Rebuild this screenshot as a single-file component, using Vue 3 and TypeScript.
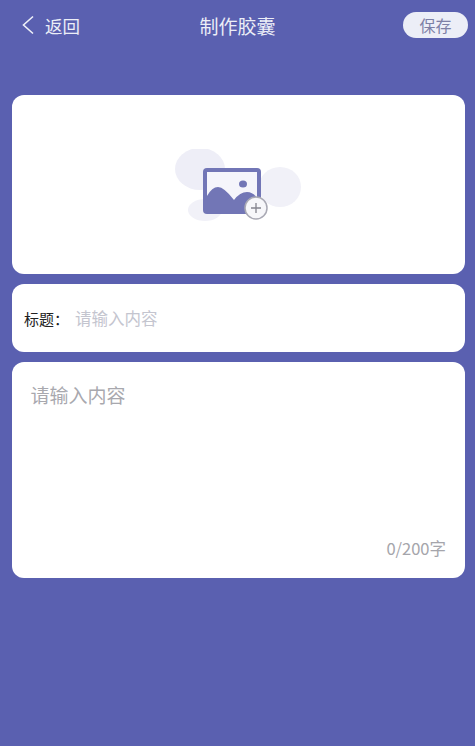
<script setup lang="ts">
const title = '制作胶囊'
</script>

<template>
  <div class="page">
    <header class="nav">
      <div class="back">
        <svg class="chev" width="14" height="20" viewBox="0 0 14 20">
          <path d="M12 1.5 L2.5 10 L12 18.5" fill="none" stroke="#eef0f8" stroke-width="1.6" />
        </svg>
        <span>返回</span>
      </div>
      <div class="title">{{ title }}</div>
      <div class="save">保存</div>
    </header>
    <main class="cards">
      <section class="card upload">
        <svg width="128" height="76" viewBox="0 0 128 76">
          <ellipse cx="26" cy="20" rx="25" ry="21" fill="#eeeef7" />
          <ellipse cx="106" cy="38" rx="21" ry="20" fill="#f1f1f8" />
          <ellipse cx="31" cy="61" rx="17" ry="11" fill="#f1f1f8" />
          <rect x="29" y="19" width="58" height="46" rx="4" fill="#7276b6" />
          <rect x="33" y="23" width="50" height="36" fill="#f5f5fb" />
          <path d="M33 47 Q38 38 44 38 Q50 38 60 51 Q66 43 73 43 Q79 43 83 49 V62 H33 Z" fill="#7276b6" />
          <ellipse cx="69" cy="35" rx="4" ry="3.6" fill="#7276b6" />
          <circle cx="82" cy="59" r="11" fill="#f7f7fa" stroke="#a9a9b4" stroke-width="1.5" />
          <path d="M82 54 V64 M77 59 H87" stroke="#85858f" stroke-width="1.3" fill="none" />
        </svg>
      </section>
      <section class="card field">
        <span class="label">标题：</span>
        <span class="hint">请输入内容</span>
      </section>
      <section class="card content">
        <div class="placeholder">请输入内容</div>
        <div class="count">0/200字</div>
      </section>
    </main>
  </div>
</template>

<style>
html, body { margin: 0; background: #5a60b0; }
</style>

<style scoped>
.page {
  width: 475px;
  height: 746px;
  background: #5a60b0;
  font-family: "Noto Sans CJK SC", "Noto Sans", sans-serif;
  overflow: hidden;
}
.nav {
  height: 95px;
  box-sizing: border-box;
  padding: 12px 7px 0 21px;
  display: flex;
  align-items: flex-start;
  justify-content: space-between;
  color: #eceef7;
  position: relative;
}
.back {
  display: flex;
  align-items: center;
  gap: 10px;
  height: 27px;
  font-size: 17.5px;
}
.chev { display: block; margin-top: -2px; }
.title {
  position: absolute;
  left: 0;
  right: 0;
  top: 12px;
  height: 27px;
  line-height: 27px;
  text-align: center;
  font-size: 19px;
}
.save {
  width: 65px;
  height: 26px;
  line-height: 26px;
  border-radius: 13px;
  background: #eceef7;
  color: #7d80a6;
  font-size: 16px;
  text-align: center;
}
.cards {
  padding: 0 10px 0 12px;
  display: flex;
  flex-direction: column;
  gap: 10px;
}
.card {
  background: #fff;
  border-radius: 12px;
}
.upload {
  height: 179px;
  box-sizing: border-box;
  padding: 54px 0 0 163px;
}
.upload svg { display: block; margin-left: -1px; }
.field {
  height: 68px;
  box-sizing: border-box;
  padding-left: 12px;
  display: flex;
  align-items: center;
}
.label { color: #222; width: 52px; white-space: nowrap; font-size: 15px; }
.hint { color: #c4c5cf; font-size: 16.5px; margin-top: -1px; margin-left: -1px; }
.content {
  height: 216px;
  box-sizing: border-box;
  padding: 19px 19px 19px 18.5px;
  display: flex;
  flex-direction: column;
  justify-content: space-between;
}
.placeholder { color: #a8a8ae; font-size: 19px; line-height: 27px; }
.count { color: #a5a5ab; font-size: 16.5px; line-height: 22px; text-align: right; }
</style>
